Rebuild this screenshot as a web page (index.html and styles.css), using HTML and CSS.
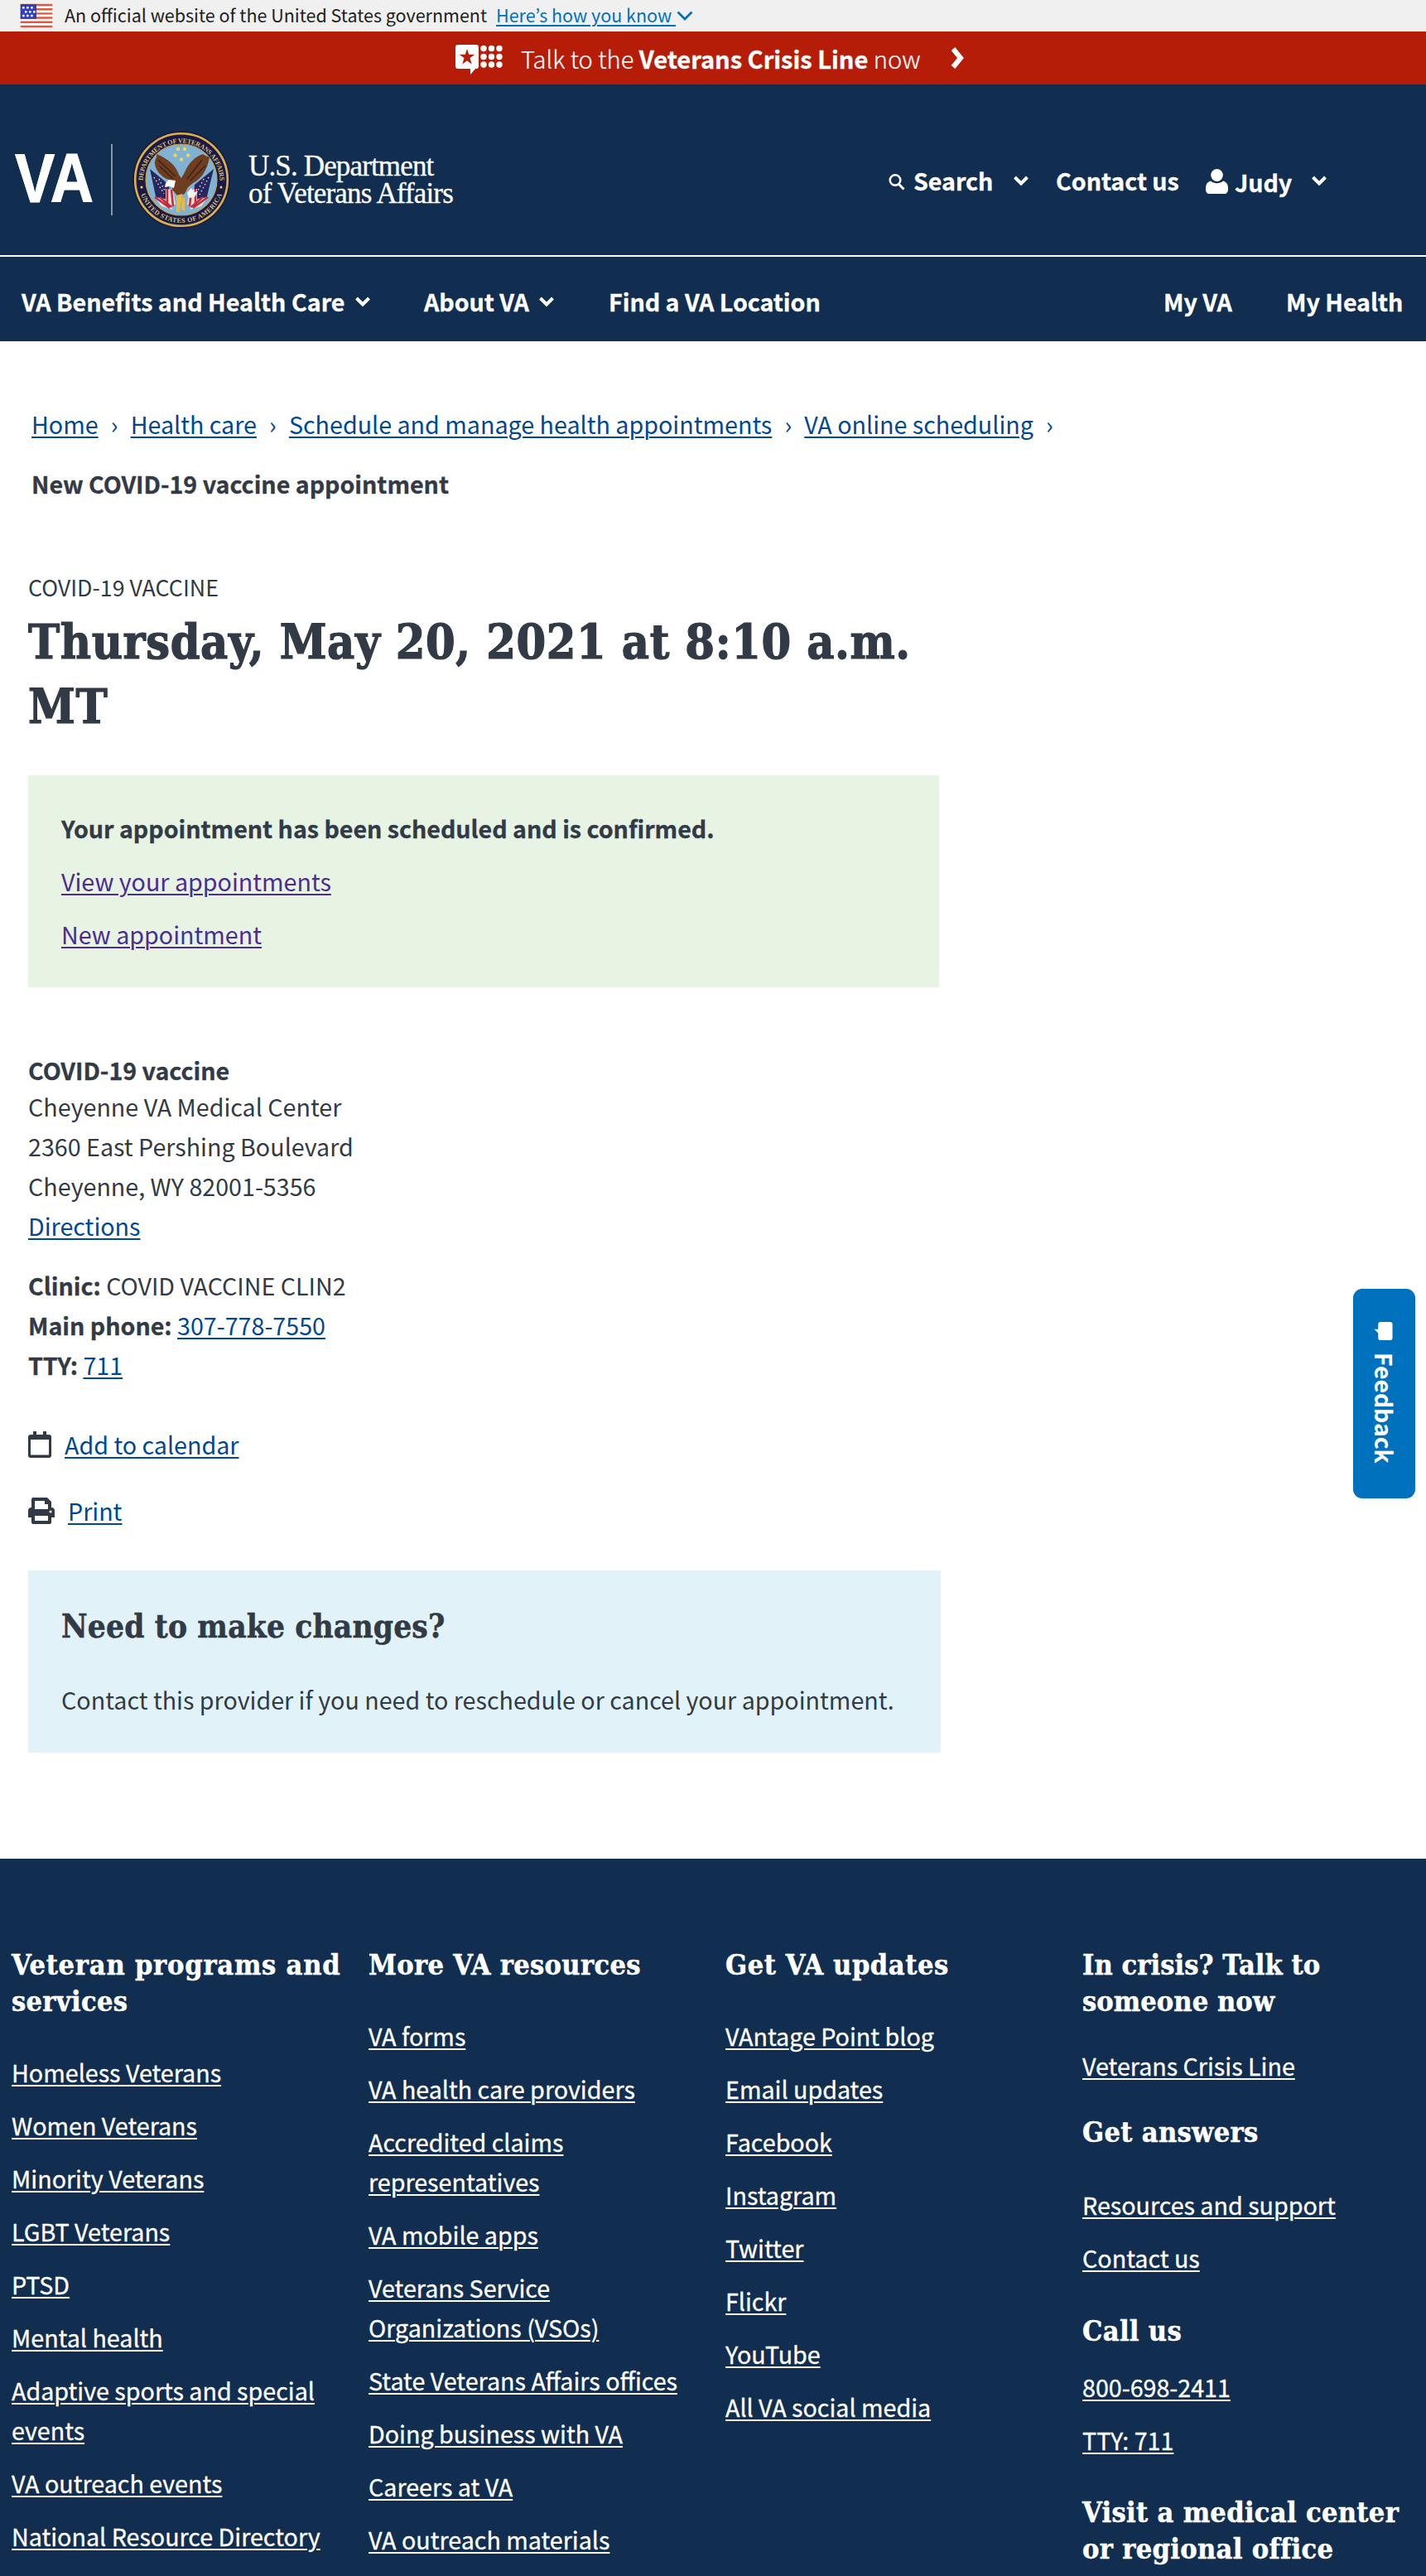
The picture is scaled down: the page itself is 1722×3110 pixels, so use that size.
FILE: index.html
```html
<!DOCTYPE html>
<html lang="en">
<head>
<meta charset="utf-8">
<title>New COVID-19 vaccine appointment | Veterans Affairs</title>
<link rel="stylesheet" href="styles.css">
</head>
<body>
<svg class="defs" width="0" height="0" aria-hidden="true">
  <symbol id="chev" viewBox="0 0 20 12"><path d="M2.500 2 10 9.500 17.500 2" fill="none" stroke="currentColor" stroke-width="4"/></symbol>
</svg>
<div class="gov">
  <svg class="flag" viewBox="0 0 40 30"><rect width="40" height="30" fill="#fff"/><path d="M0 1h40M0 6.500h40M0 11.800h40M0 17h40M0 22.500h40M0 28h40" stroke="#e0593f" stroke-width="2.500"/><rect width="20" height="18.500" fill="#2f3fbd"/><path d="M2.500 4.500h15M5.500 9.500h13M2.500 14.500h15" stroke="#fff" stroke-width="2.600" stroke-dasharray="2.600 2.600"/></svg>
  <span class="gov-text">An official website of the United States government</span>
  <a class="gov-link" href="#">Here’s how you know </a>
  <svg class="gov-chev" viewBox="0 0 20 12"><path d="M1.500 1.500 10 10 18.500 1.500" fill="none" stroke="#0071bc" stroke-width="2.800"/></svg>
</div>
<div class="crisis">
  <svg class="crisis-icon" viewBox="0 0 57 36"><path d="M3 0h22a3 3 0 0 1 3 3v23a3 3 0 0 1-3 3h-1l-6 7v-7H3a3 3 0 0 1-3-3V3a3 3 0 0 1 3-3z" fill="#fff"/><path d="M14 5l2.200 6.800h7.100l-5.800 4.200 2.200 7.500L14 19.300l-5.700 4.200 2.200-7.500-5.800-4.200h7.100z" fill="#b51d09"/><g fill="#fff"><circle cx="34" cy="4.500" r="3.700"/><circle cx="43.500" cy="4.500" r="3.700"/><circle cx="53" cy="4.500" r="3.700"/><circle cx="34" cy="14.500" r="3.700"/><circle cx="43.500" cy="14.500" r="3.700"/><circle cx="53" cy="14.500" r="3.700"/><circle cx="34" cy="24" r="3.700"/><circle cx="43.500" cy="24" r="3.700"/><circle cx="53" cy="24" r="3.700"/></g></svg>
  <span class="crisis-text">Talk to the <b>Veterans Crisis Line</b> now</span>
  <svg class="crisis-chev" viewBox="0 0 17 26"><path d="M3 2l9 11-9 11" fill="none" stroke="#fff" stroke-width="6"/></svg>
</div>
<header class="header">
  <div class="brand-row">
    <svg class="va" viewBox="0 0 95 58"><text x="0" y="58" textLength="95" lengthAdjust="spacingAndGlyphs">VA</text></svg>
    <span class="rule"></span>
    <svg class="seal" viewBox="0 0 118 118">
      <defs><path id="arcTop" d="M12.500 61a46.500 46.500 0 0 1 93 0"/><path id="arcBot" d="M7 59a52 52 0 0 0 104 0"/></defs>
      <circle cx="59" cy="59" r="59" fill="#1c1a45"/><circle cx="59" cy="59" r="55.800" fill="none" stroke="#d9b24c" stroke-width="2.600"/>
      <circle cx="59" cy="59" r="43" fill="#7fb2d3" stroke="#c9a54a" stroke-width="1.200"/>
      <text class="seal-text"><textPath href="#arcTop" startOffset="1" textLength="144">DEPARTMENT OF VETERANS AFFAIRS</textPath></text>
      <text class="seal-text"><textPath href="#arcBot" startOffset="18" textLength="127">UNITED STATES OF AMERICA</textPath></text>
      <g fill="#efd45a"><circle cx="11" cy="68" r="1.500"/><circle cx="107" cy="68" r="1.500"/><circle cx="55" cy="22" r="2.200"/><circle cx="63" cy="22" r="2.200"/><circle cx="51.500" cy="29.500" r="2.200"/><circle cx="67" cy="29.500" r="2.200"/><circle cx="59" cy="34.500" r="2.200"/></g>
      <path d="M21 46l23 19 2 24-9 0-9-10z" fill="#26275e"/><path d="M98 46L75 65l-2 24 9 0 8-10z" fill="#26275e"/>
      <path d="M26 56l12 20M32 58l8 16M92 56L81 77M86 58L78 74" stroke="#e9e4ea" stroke-width="1.400" stroke-dasharray="1.500 3"/>
      <path d="M40 70l9 1 3 18-12 2zM27 80l12 2 10 13-14-4zM78 70l-9 1-3 18 12 2zM91 80l-12 2-10 13 14-4z" fill="#f0ded9"/>
      <path d="M42 70l0 21M47 71l2 20M27 80l18 13M33 80l14 12M76 70l0 21M71 71l-2 20M91 80L73 93M85 80L71 92" stroke="#c22d3c" stroke-width="2.600"/>
      <path d="M29 28c1 5-3 7-2 12 1 8 8 16 17 19l5 3-1 9 7 8 8-3 4-8 6-5c10-5 17-15 20-31-5-2-5-2-8-4-9 3-17 10-22 22l-4 7-3-4C53 42 42 33 29 28z" fill="#6f3d20"/>
      <path d="M31 35l21 20M32 42l17 16M84 35L66 58M88 42L70 60" stroke="#3c2317" stroke-width="1.500"/>
      <path d="M52 60l-8-1-4 4-1 5 6-1 5 2z" fill="#fff"/><path d="M66 75l5-6 3 5 5-1-4 7-7 1z" fill="#f5f3ee"/>
      <path d="M53 78l7-2-3 22-4 0zM60 80l3 1 0 16-4-2z" fill="#e9ba3b"/>
    </svg>
    <div class="dept"><span>U.S. Department</span><span>of Veterans Affairs</span></div>
    <div class="tools">
      <svg class="mag" viewBox="0 0 20 21"><circle cx="8" cy="8.500" r="6.300" fill="none" stroke="#fff" stroke-width="2.500"/><path d="M12.500 13.500l6 6" stroke="#fff" stroke-width="3"/></svg>
      <span class="t-search">Search</span>
      <svg class="chev c1"><use href="#chev"/></svg>
      <span class="t-contact">Contact us</span>
      <svg class="person" viewBox="0 0 27 30"><ellipse cx="13.500" cy="7.500" rx="7.300" ry="7.500" fill="#fff"/><path d="M6 14.500c4 3.500 11 3.500 15 0 4 1 6 4 6 9.500 0 4-1.500 6-5 6H5c-3.500 0-5-2-5-6 0-5.500 2-8.500 6-9.500z" fill="#fff"/></svg>
      <span class="t-judy">Judy</span>
      <svg class="chev c2"><use href="#chev"/></svg>
    </div>
  </div>
  <nav class="nav">
    <span class="n1">VA Benefits and Health Care</span><svg class="chev nc1"><use href="#chev"/></svg>
    <span class="n2">About VA</span><svg class="chev nc2"><use href="#chev"/></svg>
    <span class="n3">Find a VA Location</span>
    <span class="n4">My VA</span>
    <span class="n5">My Health</span>
  </nav>
</header>
<main class="main">
  <div class="crumbs"><a href="#">Home</a><i>›</i><a href="#">Health care</a><i>›</i><a href="#">Schedule and manage health appointments</a><i>›</i><a href="#">VA online scheduling</a><i>›</i></div>
  <div class="crumb-current">New COVID-19 vaccine appointment</div>
  <div class="kind">COVID-19 VACCINE</div>
  <h1>Thursday, May 20, 2021 at 8:10 a.m.<br>MT</h1>
  <section class="confirm">
    <p><b>Your appointment has been scheduled and is confirmed.</b></p>
    <p><a href="#">View your appointments</a></p>
    <p><a href="#">New appointment</a></p>
  </section>
  <section class="details">
    <div class="details-title"><b>COVID-19 vaccine</b></div>
    <div>Cheyenne VA Medical Center</div>
    <div>2360 East Pershing Boulevard</div>
    <div>Cheyenne, WY 82001-5356</div>
    <div><a href="#">Directions</a></div>
  </section>
  <section class="contact">
    <div><b>Clinic:</b> COVID VACCINE CLIN2</div>
    <div><b>Main phone:</b> <a href="#">307-778-7550</a></div>
    <div><b>TTY:</b> <a href="#">711</a></div>
  </section>
  <div class="action">
    <svg class="cal" viewBox="0 0 28 32"><path d="M6 0h4v4h8V0h4v4h3a3 3 0 0 1 3 3v22a3 3 0 0 1-3 3H3a3 3 0 0 1-3-3V7a3 3 0 0 1 3-3h3zM3 10v18.500h22V10z" fill="#323a45" fill-rule="evenodd"/></svg>
    <a href="#">Add to calendar</a>
  </div>
  <div class="action">
    <svg class="print" viewBox="0 0 32 32"><path d="M6 0h17l5 5v7a4 4 0 0 1 4 4v8h-4v6a2 2 0 0 1-2 2H6a2 2 0 0 1-2-2v-6H0v-8a4 4 0 0 1 4-4V2a2 2 0 0 1 2-2zM8 4v10h16V8h-4V4zM8 22v6h16v-6zM27 15.500a1.500 1.500 0 1 0 0 3 1.500 1.500 0 0 0 0-3z" fill="#323a45" fill-rule="evenodd"/></svg>
    <a href="#">Print</a>
  </div>
  <section class="changes">
    <h3>Need to make changes?</h3>
    <p>Contact this provider if you need to reschedule or cancel your appointment.</p>
  </section>
</main>
<footer class="footer">
  <div class="col">
    <h4><span class="h-programs">Veteran programs and</span><br>services</h4>
    <ul><li><a href="#">Homeless Veterans</a></li><li><a href="#">Women Veterans</a></li><li><a href="#">Minority Veterans</a></li><li><a href="#">LGBT Veterans</a></li><li><a href="#">PTSD</a></li><li><a href="#">Mental health</a></li><li><a href="#">Adaptive sports and special<br>events</a></li><li><a href="#">VA outreach events</a></li><li><a href="#">National Resource Directory</a></li></ul>
  </div>
  <div class="col">
    <h4>More VA resources</h4>
    <ul><li><a href="#">VA forms</a></li><li><a href="#">VA health care providers</a></li><li><a href="#">Accredited claims<br>representatives</a></li><li><a href="#">VA mobile apps</a></li><li><a href="#">Veterans Service<br>Organizations (VSOs)</a></li><li><a href="#">State Veterans Affairs offices</a></li><li><a href="#">Doing business with VA</a></li><li><a href="#">Careers at VA</a></li><li><a href="#">VA outreach materials</a></li></ul>
  </div>
  <div class="col">
    <h4 class="h-updates">Get VA updates</h4>
    <ul><li><a href="#">VAntage Point blog</a></li><li><a href="#">Email updates</a></li><li><a href="#">Facebook</a></li><li><a href="#">Instagram</a></li><li><a href="#">Twitter</a></li><li><a href="#">Flickr</a></li><li><a href="#">YouTube</a></li><li><a href="#">All VA social media</a></li></ul>
  </div>
  <div class="col">
    <h4 class="h-crisis">In crisis? Talk to<br>someone now</h4>
    <ul class="u-crisis"><li><a href="#">Veterans Crisis Line</a></li></ul>
    <h4 class="h-answers">Get answers</h4>
    <ul class="u-answers"><li><a href="#">Resources and support</a></li><li><a href="#">Contact us</a></li></ul>
    <h4 class="h-call">Call us</h4>
    <ul class="u-call"><li><a href="#">800-698-2411</a></li><li><a href="#">TTY: 711</a></li></ul>
    <h4 class="h-visit">Visit a medical center<br>or regional office</h4>
  </div>
</footer>
<div class="feedback">
  <svg viewBox="0 0 24 23"><path d="M3 0h17a3 3 0 0 1 3 3v12a3 3 0 0 1-3 3h-6l-5 5v-5H3a3 3 0 0 1-3-3V3a3 3 0 0 1 3-3z" fill="#fff"/></svg>
  <span>Feedback</span>
</div>
</body>
</html>
```
FILE: styles.css
```css
* { box-sizing: border-box; }
body { margin: 0; width: 1722px; height: 3110px; overflow: hidden; position: relative; background: #fff; color: #323a45; font: 28.67px/48px "Noto Sans CJK KR", "Open Sans", sans-serif; white-space: nowrap; }
svg { display: block; flex: none; overflow: visible; }
.defs { position: absolute; }
a { color: #004795; text-decoration: underline; text-decoration-thickness: 2px; text-underline-offset: 3px; }
b { letter-spacing: -0.04px; -webkit-text-stroke: 0.3px currentColor; }
p, h1, h3, h4, ul { margin: 0; padding: 0; list-style: none; }
h1, h3, h4 { font-family: "DejaVu Serif Condensed", "DejaVu Serif", serif; font-stretch: condensed; font-weight: 700; -webkit-text-stroke: 0.5px currentColor; }

.gov { height: 38px; background: #f0f0f0; display: flex; align-items: center; padding-left: 24px; font-size: 21.5px; line-height: 34px; color: #212121; }
.gov-text, .gov-link { padding-bottom: 2px; }
.flag { width: 40px; height: 29px; }
.gov-text { margin-left: 14px; width: 521px; }
.gov-link { color: #0071bc; width: 217px; white-space: pre; }
.gov-chev { width: 20px; height: 12px; margin-left: 1px; }

.crisis { height: 64px; background: #b51d09; color: #fff; display: flex; align-items: center; padding-left: 550px; }
.crisis-icon { width: 57px; height: 36px; align-self: flex-start; margin-top: 16px; }
.crisis-text { margin-left: 22px; width: 519px; font-weight: 300; font-size: 29.1px; -webkit-text-stroke: 0.2px currentColor; }
.crisis-text b { font-weight: 700; }
.crisis-chev { width: 17px; height: 26px; }

.header { background: #112e51; color: #fff; font-weight: 700; letter-spacing: -0.05px; -webkit-text-stroke: 0.3px currentColor; }
.brand-row { height: 206px; display: flex; align-items: flex-start; padding-left: 18px; }
.va { width: 95px; height: 58px; margin: 84px 2px 0 0; fill: #fff; stroke: #fff; font: 700 83px "Liberation Sans", sans-serif; -webkit-text-stroke: 1.5px #fff; }
.rule { width: 2px; height: 86px; margin: 72px 24px 0 19px; background: #8795a8; }
.seal { width: 118px; height: 118px; margin-top: 56px; }
.seal-text { font: 700 8px "Liberation Serif", serif; fill: #d9c078; -webkit-text-stroke: 0; }
.dept { margin: 82px 0 0 22px; width: 773px; display: flex; flex-direction: column; font: 400 35px/33px "Liberation Serif", serif; letter-spacing: -0.85px; }
.tools { display: flex; align-items: flex-start; line-height: 48px; padding-top: 92px; }
.mag { width: 20px; height: 21px; margin: 15px 10px 0 0; }
.t-search { width: 120px; }
.chev { width: 20px; height: 12px; color: #fff; }
.c1 { margin: 18px 32px 0 0; }
.c2 { margin-top: 18px; }
.t-contact { width: 181px; }
.person { width: 27px; height: 30px; margin: 10px 8px 0 0; }
.t-judy { width: 92px; margin-top: 2px; }
.nav { height: 104px; border-top: 2px solid #fff; display: flex; align-items: center; padding: 6px 0 0 26px; }
.n1 { width: 402px; letter-spacing: 0; }
.n2 { width: 138px; }
.n3 { width: 670px; }
.n4 { width: 148px; }
.nc1 { margin-right: 64px; }
.nc2 { margin-right: 65px; }

.main { height: 1832px; padding: 76px 0 0 34px; }
.crumbs { display: flex; padding-left: 4px; color: #004795; }
.crumbs i { font-style: normal; width: 39px; text-align: center; }
.crumb-current { margin: 24px 0 0 4px; font-weight: 700; letter-spacing: -0.04px; -webkit-text-stroke: 0.3px currentColor; }
.kind { margin-top: 77px; font-size: 26.8px; }
h1 { font-size: 57px; line-height: 78px; margin-top: 3px; letter-spacing: 0.6px; -webkit-text-stroke-width: 1.2px; }
.confirm { width: 1100px; height: 256px; margin-top: 44px; padding: 40px; background: #e7f4e4; }
.confirm p + p { margin-top: 16px; }
.confirm a { color: #4c2c92; }
.details { margin-top: 76px; }
.details-title { height: 44px; }
.contact { margin-top: 24px; }
.action { display: flex; align-items: center; margin-top: 48px; height: 48px; }
.action + .action { margin-top: 32px; }
.cal { width: 28px; height: 32px; margin-right: 16px; }
.print { width: 32px; height: 32px; margin-right: 16px; }
.changes { width: 1102px; height: 220px; margin-top: 48px; padding: 42px 40px 40px; background: #e1f3f8; }
h3 { font-size: 38.5px; line-height: 52px; letter-spacing: 0.15px; }
.changes p { margin-top: 38px; }

.footer { height: 866px; background: #112e51; color: #fff; display: grid; grid-template-columns: repeat(4, 431px); padding: 106px 0 0 14px; }
.footer a { color: #fff; -webkit-text-stroke: 0.3px currentColor; }
h4 { font-size: 34px; line-height: 44px; letter-spacing: 0.35px; }
.h-programs { letter-spacing: 0.8px; }
.h-updates { letter-spacing: 0.6px; }
.h-crisis { letter-spacing: 0.1px; }
.footer ul { padding-top: 40px; }
.footer li { margin-bottom: 16px; }
.footer .u-crisis { padding-top: 32px; }
.footer .u-answers { padding-top: 42px; }
.footer .u-call { padding-top: 22px; }
.h-answers { margin-top: 34px; }
.h-call { margin-top: 42px; }
.h-visit { margin-top: 41px; }

.feedback { position: absolute; left: 1634px; top: 1556px; width: 75px; height: 253px; border-radius: 11px; background: #0071bc; color: #fff; writing-mode: vertical-rl; display: flex; align-items: center; padding: 40px 0 0 1px; font: 700 28.3px/36px "Noto Sans CJK KR", sans-serif; }
.feedback svg { width: 23px; height: 23px; transform: rotate(90deg); margin: 0 3px 14px 0; }
```
